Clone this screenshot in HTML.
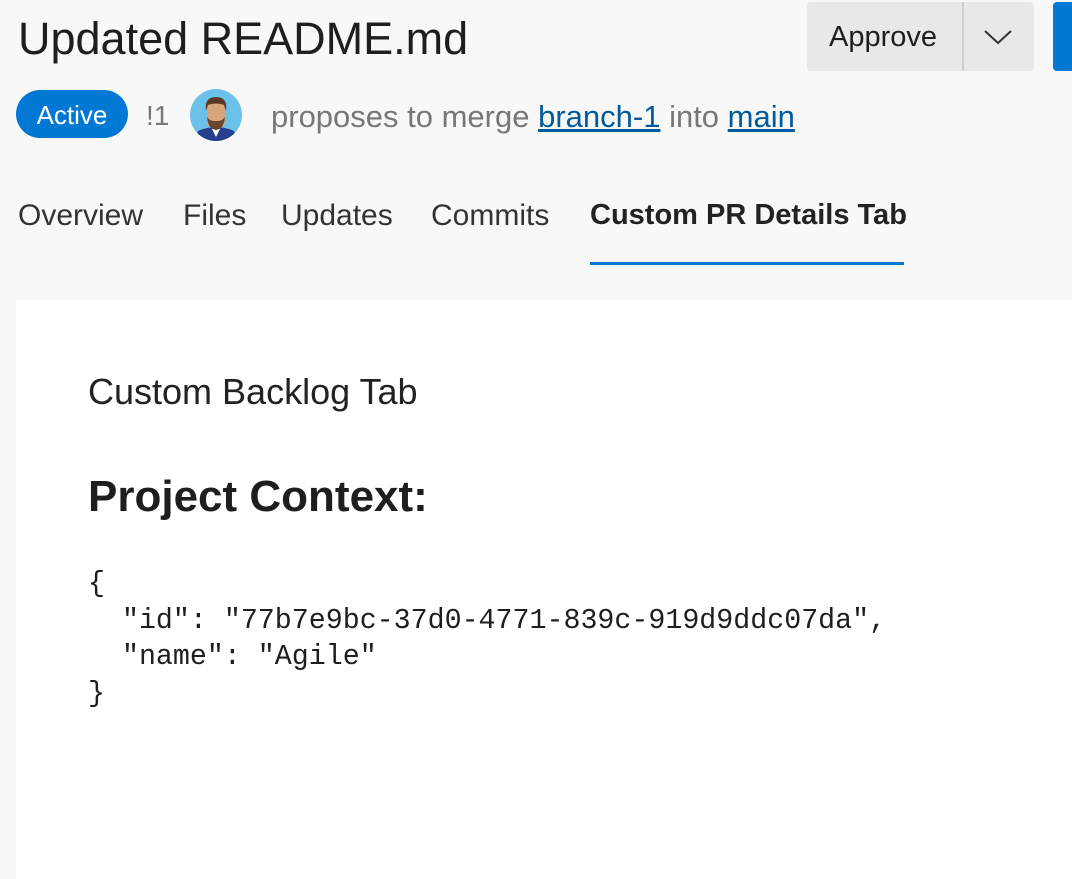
<!DOCTYPE html>
<html><head><meta charset="utf-8"><style>
body{margin:0;width:1072px;height:879px;background:#f8f8f8;font-family:"Liberation Sans",sans-serif;position:relative;overflow:hidden;color:#201f1e}
.a{position:absolute;white-space:nowrap}
</style></head><body>
<div class="a" style="left:18px;top:13px;font-size:45px;color:#1e1e1e">Updated README.md</div>
<div class="a" style="left:807px;top:2px;width:227px;height:69px;background:#e8e8e8;border-radius:4px"></div>
<div class="a" style="left:962px;top:2px;width:2px;height:69px;background:#d0d0d0"></div>
<div class="a" style="left:829px;top:21px;font-size:29px;color:#1e1e1e">Approve</div>
<svg class="a" style="left:983px;top:28px" width="30" height="18"><path d="M2 3 L15 15 L28 3" fill="none" stroke="#333" stroke-width="2"/></svg>
<div class="a" style="left:1053px;top:2px;width:30px;height:69px;background:#0078d4;border-radius:4px"></div>
<div class="a" style="left:16px;top:90px;width:112px;height:48px;background:#0078d4;border-radius:24px;color:#fff;font-size:26px;line-height:50px;text-align:center">Active</div>
<div class="a" style="left:146px;top:100px;font-size:28px;color:#777">!1</div>
<svg class="a" style="left:190px;top:89px" width="52" height="52" viewBox="0 0 52 52">
<defs><clipPath id="c"><circle cx="26" cy="26" r="26"/></clipPath></defs>
<g clip-path="url(#c)"><rect width="52" height="52" fill="#6cc1ea"/>
<path d="M4 52 L8 42 Q26 34 44 42 L48 52Z" fill="#27408b"/>
<path d="M22 40 L26 48 L30 40Z" fill="#fff"/>
<rect x="17" y="12" width="18" height="28" rx="8" fill="#d9a77c"/>
<path d="M16 22 Q14 8 26 8 Q38 8 36 22 L34 16 Q26 13 18 16Z" fill="#5a3a26"/>
<path d="M17 28 Q18 40 26 41 Q34 40 35 28 Q31 33 26 32 Q21 33 17 28Z" fill="#6b4630"/></g></svg>
<div class="a" style="left:271px;top:99px;font-size:31px;color:#777">proposes to merge <span style="color:#005a9e;text-decoration:underline">branch-1</span> into <span style="color:#005a9e;text-decoration:underline">main</span></div>
<div class="a" style="left:18px;top:199px;font-size:30px;color:#333">Overview</div>
<div class="a" style="left:183px;top:199px;font-size:30px;color:#333">Files</div>
<div class="a" style="left:281px;top:199px;font-size:30px;color:#333">Updates</div>
<div class="a" style="left:431px;top:199px;font-size:30px;color:#333">Commits</div>
<div class="a" style="left:590px;top:199px;font-size:29px;font-weight:bold;color:#222">Custom PR Details Tab</div>
<div class="a" style="left:590px;top:262px;width:314px;height:3px;background:#0078d4"></div>
<div class="a" style="left:16px;top:300px;width:1056px;height:579px;background:#fff"></div>
<div class="a" style="left:88px;top:371px;font-size:36px;color:#222">Custom Backlog Tab</div>
<div class="a" style="left:88px;top:472px;font-size:44px;font-weight:bold;color:#1e1e1e">Project Context:</div>
<pre class="a" style="left:88px;top:566px;margin:0;white-space:pre;font-family:'Liberation Mono',monospace;font-size:28.3px;line-height:36.5px;color:#1e1e1e">{
  "id": "77b7e9bc-37d0-4771-839c-919d9ddc07da",
  "name": "Agile"
}</pre>
</body></html>
